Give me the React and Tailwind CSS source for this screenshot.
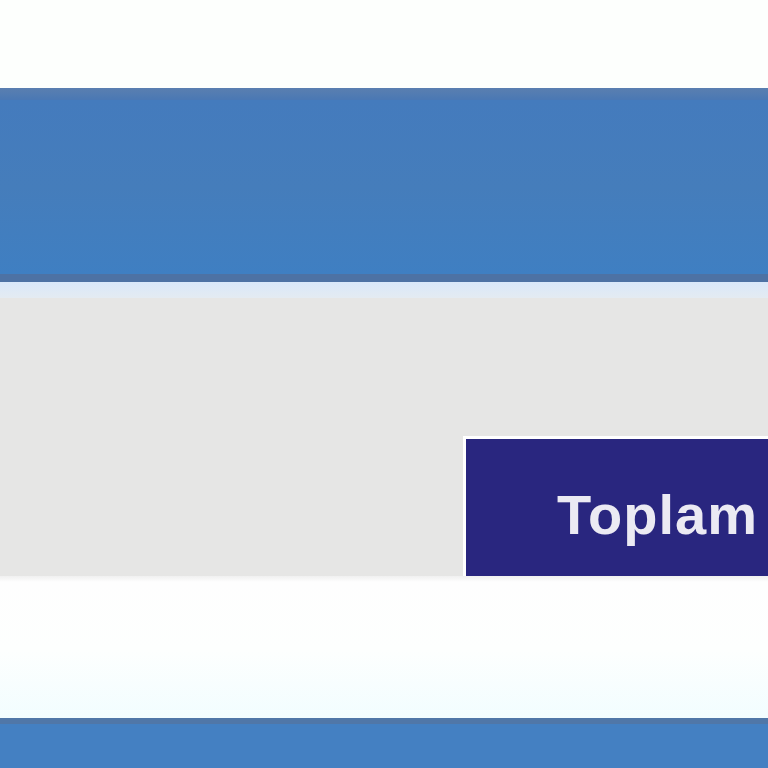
export default function App() {
  return (
    <div className="w-[768px] h-[768px] overflow-hidden bg-white flex flex-col" style={{ fontFamily: '"Liberation Sans", Arial, sans-serif' }}>
      <div className="h-[88px] bg-[#fdfffd]" />
      <div className="h-[194px] flex flex-col">
        <div className="h-[12px] bg-gradient-to-b from-[#5a7fb0] to-[#4a78b4]" />
        <div className="flex-1 bg-gradient-to-b from-[#447bbd] via-[#457dbb] to-[#3f7fc2]" />
        <div className="h-[8px] bg-[#4d72a4]" />
      </div>
      <div className="h-[16px] bg-gradient-to-b from-[#d9e8fa] to-[#e4ebf2]" />
      <div className="h-[278px] bg-[#e6e6e5] flex items-end justify-end">
        <div className="w-[305px] h-[140px] bg-white pl-[3px] pt-[3px]">
          <div className="h-full bg-[#29267f] pl-[91px] pt-[48px]">
            <span className="block text-[56px] font-bold text-[#ebeaf3] leading-none whitespace-nowrap tracking-[1px]">Toplam</span>
          </div>
        </div>
      </div>
      <div className="h-[6px] bg-gradient-to-b from-[#f0f0f0] to-[#fefefe]" />
      <div className="h-[136px] bg-gradient-to-b from-[#fefefe] via-[#fdfffe] to-[#f2fdff]" />
      <div className="flex-1 flex flex-col">
        <div className="h-[6px] bg-[#5077a8]" />
        <div className="flex-1 bg-[#4480c2]" />
      </div>
    </div>
  );
}
